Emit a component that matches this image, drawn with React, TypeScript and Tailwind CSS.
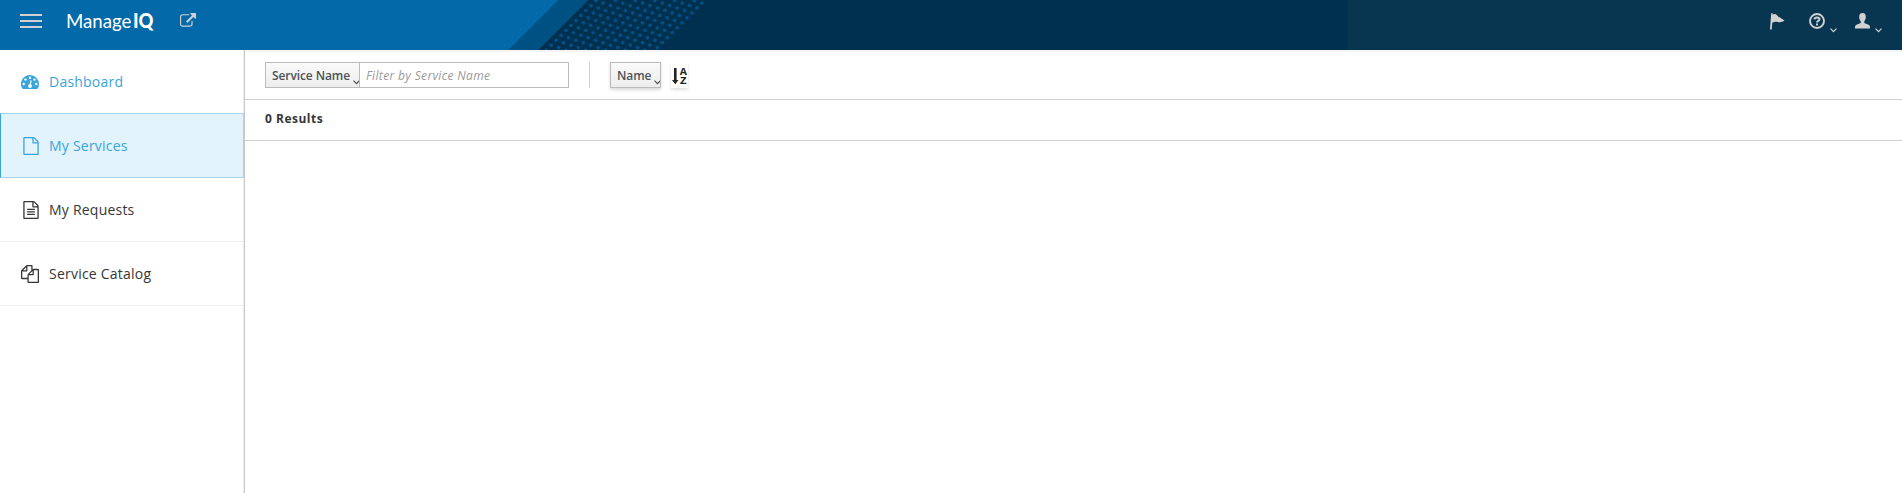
import React from "react";

const FILE =
  "M1596 380q28 28 48 76t20 88v1152q0 40-28 68t-68 28h-1344q-40 0-68-28t-28-68v-1600q0-40 28-68t68-28h896q40 0 88 20t76 48zm-444-244v376h376q-10-29-22-41l-313-313q-12-12-41-22zm384 1528v-1024h-416q-40 0-68-28t-28-68v-416h-768v1536h1280z";
const COPY =
  "M1696 384q40 0 68 28t28 68v1216q0 40-28 68t-68 28h-960q-40 0-68-28t-28-68v-288h-544q-40 0-68-28t-28-68v-672q0-40 20-88t48-76l408-408q28-28 76-48t88-20h416q40 0 68 28t28 68v328q68-40 128-40h416zm-544 213l-299 299h299v-299zm-640-384l-299 299h299v-299zm196 647l316-316v-416h-384v416q0 40-28 68t-68 28h-416v640h512v-256q0-40 20-88t48-76zm956 804v-1152h-384v416q0 40-28 68t-68 28h-416v640h896z";
const EXTERNAL =
  "M1408 928v320q0 119-84.5 203.5t-203.5 84.5h-832q-119 0-203.5-84.5t-84.5-203.5v-832q0-119 84.5-203.5t203.5-84.5h704q14 0 23 9t9 23v64q0 14-9 23t-23 9h-704q-66 0-113 47t-47 113v832q0 66 47 113t113 47h832q66 0 113-47t47-113v-320q0-14 9-23t23-9h64q14 0 23 9t9 23zm384-864v512q0 26-19 45t-45 19-45-19l-176-176-652 652q-10 10-23 10t-23-10l-114-114q-10-10-10-23t10-23l652-652-176-176q-19-19-19-45t19-45 45-19h512q26 0 45 19t19 45z";

function Gauge() {
  return (
    <svg className="h-[14px] w-[18px]" viewBox="0 0 18 14">
      <path fill="currentColor" d="M9 0a9 9 0 0 1 9 9c0 1.8-.5 3.500-1.300 4.600-.2.300-.4.400-.7.400H2c-.3 0-.5-.1-.7-.4A9 9 0 0 1 9 0z" />
      <g fill="#fff">
        <circle cx="2.700" cy="9" r="1.200" />
        <circle cx="4.500" cy="4.600" r="1.200" />
        <circle cx="9" cy="2.700" r="1.200" />
        <circle cx="13.500" cy="4.600" r="1.200" />
        <circle cx="15.300" cy="9" r="1.200" />
        <circle cx="9" cy="11" r="1.900" />
        <path d="M9.500 5.300l1.100.2-.9 5.700-1.400-.3z" />
      </g>
    </svg>
  );
}

function Doc({ lines = false }: { lines?: boolean }) {
  return (
    <svg className="ml-px h-[18px] w-[18px]" viewBox="0 0 1792 1792" fill="currentColor">
      <path d={FILE} />
      {lines && <path d="M512 768h768v120H512zM512 1024h768v120H512zM512 1280h768v120H512z" />}
    </svg>
  );
}

function Caret({ className }: { className: string }) {
  return (
    <svg className={`h-[5px] w-[7px] shrink-0 ${className}`} viewBox="0 0 7 5" fill="none" stroke="currentColor" strokeWidth="1.200">
      <path d="M.5.700l3 3 3-3" />
    </svg>
  );
}

function Dots() {
  const dots: React.ReactElement[] = [];
  for (let d = 0; d < 12; d++) {
    for (let k = -8; k < 12; k++) {
      const x = 595.7 + d * 7.4 - k * 4.95;
      const y = 0.6 + d * 2.47 + k * 4.95;
      if (y > -2 && y < 52) dots.push(<circle key={`${d}-${k}`} cx={x} cy={y} r="1.850" />);
    }
  }
  return <g fill="#005183">{dots}</g>;
}

function Item({ icon, label, state = "normal" }: { icon: React.ReactNode; label: string; state?: "normal" | "hover" | "active" }) {
  const look = {
    normal: "h-16 border-b border-b-[#ededed] pl-5",
    hover: "h-[63px] pl-5 text-[#39a5dc]",
    active: "-mr-px h-[65px] border border-[#a7d4ea] border-l-[#39a5dc] bg-[#e2f3fc] pl-[19px] text-[#39a5dc]",
  }[state];
  return (
    <li className={`flex items-center text-[14px] tracking-[0.22px] ${look}`}>
      <span className="flex w-[29px] items-center pl-px">{icon}</span>
      <span>{label}</span>
    </li>
  );
}

export default function App() {
  return (
    <div className="flex h-[493px] flex-col overflow-hidden bg-white font-['Open_Sans',sans-serif] text-[#363636]">
      <header className="relative h-[50px] shrink-0 bg-[#003050] text-[#d1d1d1]">
        <svg className="absolute inset-0 h-[50px] w-full" viewBox="0 0 1902 50" preserveAspectRatio="none">
          <Dots />
          <path d="M0 0H588.500L538.500 50H0z" fill="#005183" />
          <path d="M0 0H558.500L508.500 50H0z" fill="#0369a9" />
          <path d="M1348 0H1902V50H1348z" fill="#083550" />
        </svg>
        <div className="relative flex h-[42px] items-center">
          <div className="ml-5 flex w-[22px] flex-col gap-1">
            <i className="h-0.5 bg-[#d1d1d1]" />
            <i className="h-0.5 bg-[#d1d1d1]" />
            <i className="h-0.5 bg-[#d1d1d1]" />
          </div>
          <svg className="ml-[25px] h-6 w-[90px]" viewBox="0 0 90 24" fill="#fff">
            <text x="-1" y="18.700" fontFamily="Lato" fontSize="20" textLength="65.500" lengthAdjust="spacingAndGlyphs">Manage</text>
            <text x="66" y="18.700" fontFamily="Lato" fontWeight="900" fontSize="20" textLength="20.500" lengthAdjust="spacingAndGlyphs">IQ</text>
          </svg>
          <svg className="ml-[23px] h-4 w-4" viewBox="0 0 1792 1792" fill="currentColor">
            <path d={EXTERNAL} />
          </svg>
          <div className="ml-auto flex h-[42px] items-center">
            <svg className="h-[17px] w-[15px]" viewBox="0 0 15 17" fill="currentColor">
              <path d="M1.200 0l1.500.4-.2 1.200C4.500.5 6.200 1.200 7.500 2.800 8.700 4.300 10 4.600 11 5.200L14.500 7.500C12.500 9.200 10 9.500 7.800 9 5.800 8.500 4 8.900 2.300 9.800L1.700 16.500H0z" />
            </svg>
            <svg className="ml-6 h-4 w-4" viewBox="0 0 16 16" fill="none" stroke="currentColor">
              <circle cx="8" cy="8" r="7" strokeWidth="1.900" />
              <path d="M5.500 6.300C5.800 3.900 10.500 3.800 10.500 6.200 10.500 8 8 7.700 8 9.600M8 10.600v2" strokeWidth="2" />
            </svg>
            <Caret className="mt-[19px] ml-[5px]" />
            <svg className="ml-[18px] h-4 w-[15px]" viewBox="0 0 15 16" fill="currentColor">
              <path d="M7.500 0c2.300 0 3.500 1.500 3.300 4.200-.1 1.800-.7 3.100-1.500 3.800v2l4.200 1.700c1 .5 1.500 1.200 1.500 2.300v1.500H0V14c0-1.100.5-1.800 1.500-2.300L5.700 10V8c-.8-.7-1.400-2-1.500-3.800C4 1.500 5.200 0 7.500 0z" />
            </svg>
            <Caret className="mt-[19px] mr-5 ml-[5px]" />
          </div>
        </div>
      </header>
      <div className="flex min-h-0 flex-1">
        <nav className="flex w-[245px] shrink-0 border-r border-[#c8c8c8]">
          <ul className="flex-1 border-r border-[#ededed]">
            <Item icon={<Gauge />} label="Dashboard" state="hover" />
            <Item icon={<Doc />} label="My Services" state="active" />
            <Item icon={<Doc lines />} label="My Requests" />
            <Item
              icon={
                <svg className="h-[18px] w-[18px]" viewBox="0 0 1792 1792" fill="currentColor">
                  <path d={COPY} />
                </svg>
              }
              label="Service Catalog"
            />
          </ul>
        </nav>
        <main className="min-w-0 flex-1">
          <div className="flex h-[50px] items-start border-t-2 border-b border-t-[#f5f5f5] border-b-[#d1d1d1] pt-2.5 pl-5 text-[12px]">
            <button className="flex h-[26px] w-[94px] items-center overflow-hidden border border-r-0 border-[#bbb] bg-linear-to-b from-[#fafafa] to-[#ededed] pt-px pl-1.5 font-semibold tracking-[-0.1px] whitespace-nowrap text-[#4d5258]">
              <span className="w-[81px] shrink-0 text-left">Service Name</span>
              <Caret className="mt-3.5" />
            </button>
            <input className="h-[26px] w-[210px] border border-[#bbb] px-1.5 tracking-[0.35px] italic placeholder:text-[#999]" placeholder="Filter by Service Name" />
            <div className="ml-5 h-[26px] w-px bg-[#d1d1d1]" />
            <button className="ml-5 flex h-[26px] w-[51px] items-center overflow-hidden border border-[#bbb] bg-linear-to-b from-[#fafafa] to-[#ededed] pt-px pl-1.5 font-semibold tracking-[-0.1px] text-[#4d5258] shadow-[0_2px_3px_rgba(3,3,3,0.15)]">
              <span className="w-[37px] shrink-0 text-left">Name</span>
              <Caret className="mt-3.5" />
            </button>
            <button className="ml-2.5 h-[26px] w-[17px] bg-white text-[#222] shadow-[0_2px_3px_rgba(3,3,3,0.12)]">
              <svg className="h-[26px] w-[17px]" viewBox="0 0 17 26" fill="currentColor">
                <path d="M3 6h2.600v12H7.500l-3.200 4.200L1 18h2z" />
                <text x="8.800" y="13" fontFamily="Liberation Mono" fontWeight="700" fontSize="11" textLength="7.200" lengthAdjust="spacingAndGlyphs">A</text>
                <text x="8.800" y="22.200" fontFamily="Liberation Mono" fontWeight="700" fontSize="11" textLength="7" lengthAdjust="spacingAndGlyphs">Z</text>
              </svg>
            </button>
          </div>
          <div className="flex h-[41px] items-center border-b border-[#d1d1d1] pb-0.5 pl-5 text-[12px] font-bold tracking-[0.5px]">0 Results</div>
        </main>
      </div>
    </div>
  );
}
